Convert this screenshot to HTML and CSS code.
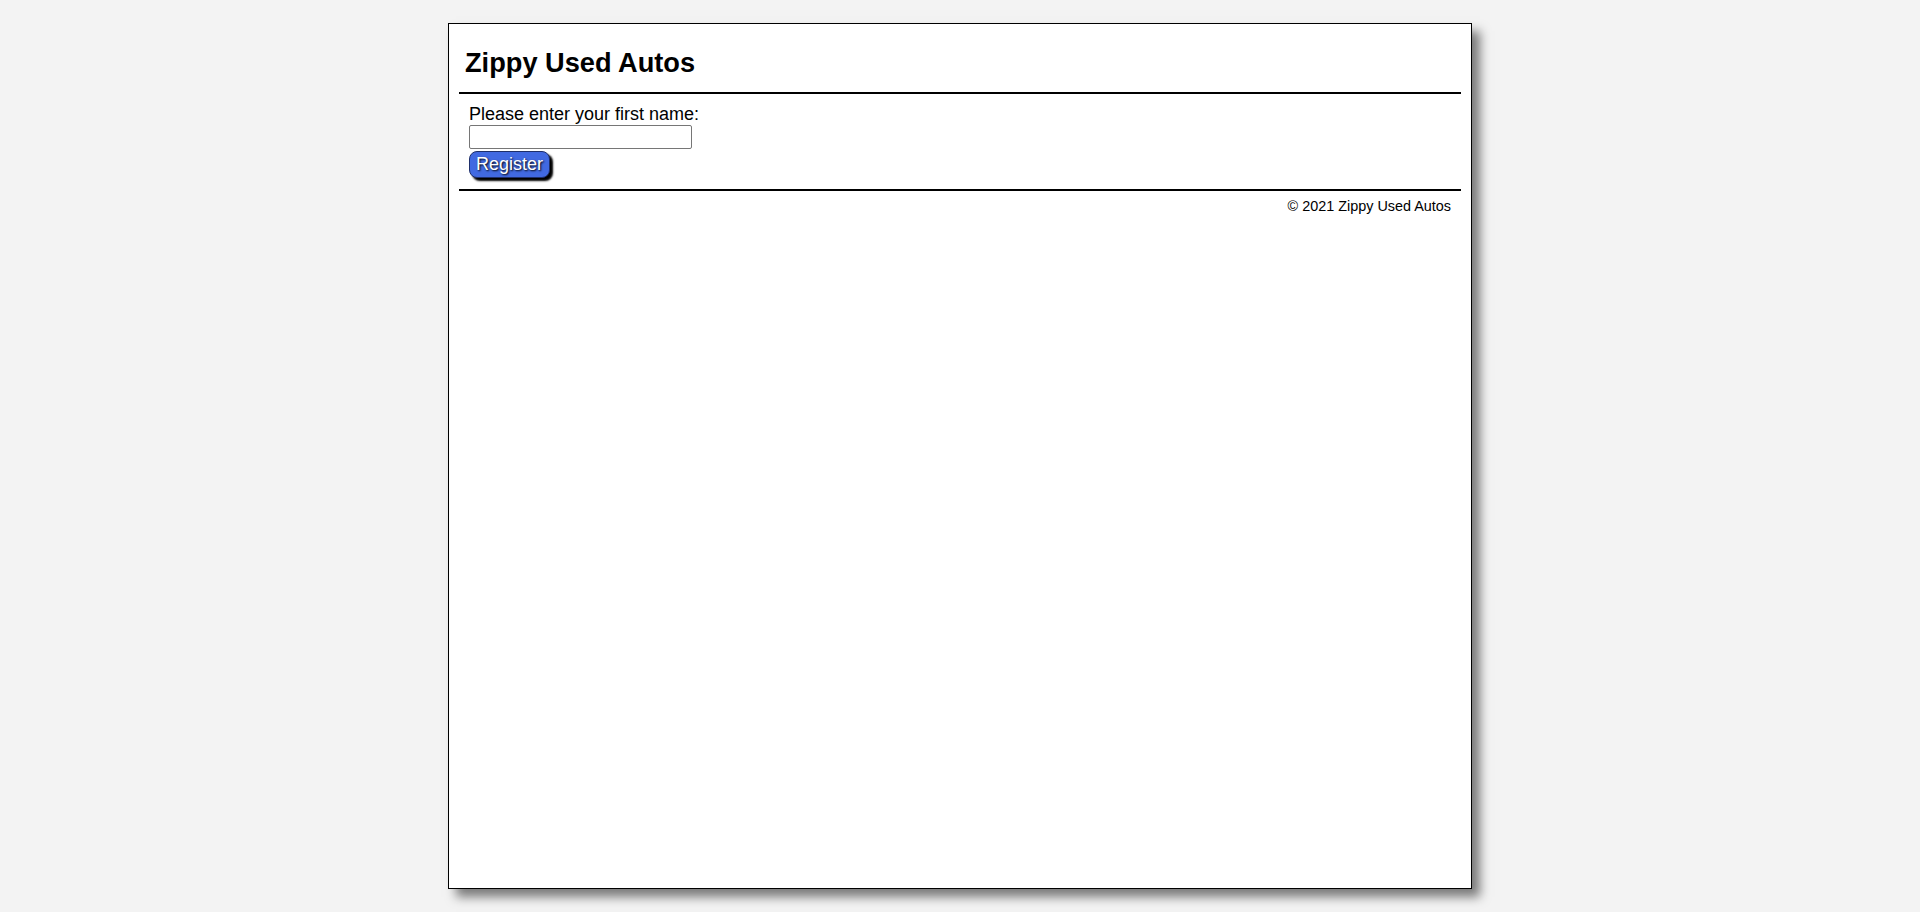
FILE: index.html
```html
<!DOCTYPE html>
<html>
<head>
<meta charset="utf-8">
<title>Zippy Used Autos</title>
<link rel="stylesheet" href="styles.css">
</head>
<body>
<div class="page">
  <header class="site-header">
    <h1 class="site-title">Zippy Used Autos</h1>
  </header>
  <main class="content">
    <form class="reg-form">
      <label class="reg-label" for="fname">Please enter your first name:</label>
      <input class="reg-input" type="text" id="fname">
      <button class="reg-button" type="button">Register</button>
    </form>
  </main>
  <footer class="site-footer">© 2021 Zippy Used Autos</footer>
</div>
</body>
</html>
```

FILE: styles.css
```css
html, body {
  margin: 0;
  padding: 0;
}
html {
  background: #f3f3f3;
  min-height: 100%;
}
body {
  background: #f3f3f3;
  font-family: "Liberation Sans", Arial, sans-serif;
  font-size: 18px;
  color: #000;
  padding: 23px 0 23px;
  box-sizing: border-box;
  min-height: 912px;
}
.page {
  box-sizing: border-box;
  width: 1024px;
  height: 866px;
  margin: 0 auto;
  background: #fff;
  border: 1px solid #000;
  box-shadow: 8px 8px 10px #7a7a7a;
  padding: 0 10px;
}
.site-header {
  border-bottom: 2px solid #000;
  padding: 23px 6px 14px;
}
.site-title {
  margin: 0;
  font-size: 27.2px;
  font-weight: bold;
  line-height: 31px;
}
.content {
  padding: 10px 10px 11px;
  border-bottom: 2px solid #000;
}
.reg-form {
  display: flex;
  flex-direction: column;
  align-items: flex-start;
}
.reg-label {
  font-size: 18px;
  line-height: 21px;
}
.reg-input {
  box-sizing: border-box;
  width: 223px;
  height: 24px;
  margin: 0;
  border: 1px solid #767676;
  border-radius: 2px;
  padding: 1px 2px;
  font-size: 16px;
}
.reg-button {
  box-sizing: border-box;
  margin: 2px 0 0;
  height: 27px;
  padding: 0 6px;
  background: #4169e1;
  color: #fff;
  font-family: "Liberation Sans", Arial, sans-serif;
  font-size: 18px;
  line-height: 23px;
  border: 1px solid #1f2f6a;
  border-radius: 8px;
  box-shadow: 3px 3px 2px #000;
  text-shadow: 1px 1px 2px #000;
}
.site-footer {
  text-align: right;
  font-size: 14.4px;
  line-height: 17px;
  padding: 7px 10px 0;
}
```
